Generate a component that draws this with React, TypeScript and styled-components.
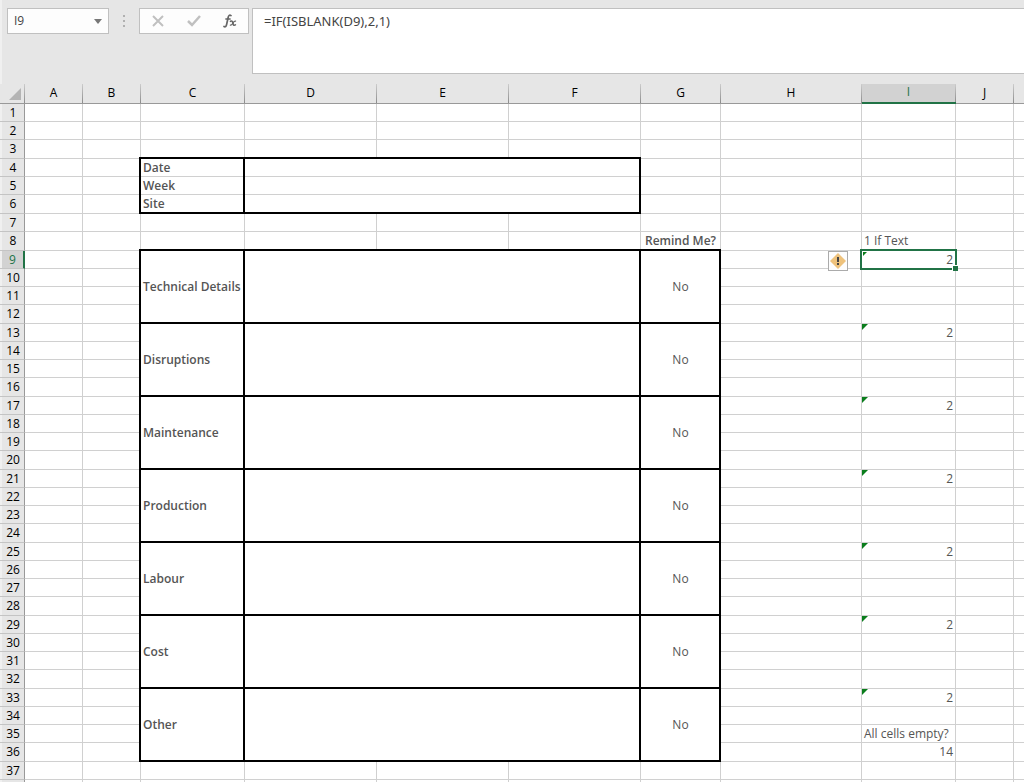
import React from "react";
import styled, { createGlobalStyle, css } from "styled-components";

const GREEN = "#217346";
const GRID = "#d0d0d0";
const LINE = "#999999";
const EDGE = "linear-gradient(#f0f0f0, #f0f0f0) left / 2px 100% no-repeat";

const GlobalStyle = createGlobalStyle`
  *, *::before, *::after { box-sizing: border-box; }
  body {
    margin: 0;
    background: #fff;
    font-family: "Open Sans", "Noto Sans", sans-serif;
    font-size: 12px;
    line-height: 16px;
    color: #555;
  }
  input, textarea, button { font: inherit; color: inherit; margin: 0; }
`;

const Window = styled.div`
  height: 100vh;
  overflow: hidden;
  display: flex;
  flex-direction: column;
`;

const FormulaBar = styled.header`
  flex: none;
  display: flex;
  align-items: flex-start;
  padding: 8px 0 10px 7px;
  background: ${EDGE} #e6e6e6;
`;

const NameBox = styled.div`
  display: flex;
  width: 102px;
  height: 26px;
  background: #fdfdfd;
  border: 1px solid #c0c0c0;
`;

const NameInput = styled.input`
  flex: 1;
  min-width: 0;
  padding: 0 0 0 6px;
  border: 0;
  background: none;
  outline: none;
  color: #444;
`;

const PlainButton = styled.button`
  display: flex;
  align-items: center;
  justify-content: center;
  padding: 0;
  border: 0;
  background: none;
`;

const DropButton = styled(PlainButton)`
  width: 20px;
`;

const Dots = styled.div`
  display: flex;
  flex-direction: column;
  align-items: center;
  justify-content: center;
  gap: 3px;
  width: 30px;
  height: 26px;
`;

const Dot = styled.span`
  width: 2px;
  height: 2px;
  background: #b0b0b0;
`;

const Actions = styled.div`
  display: flex;
  width: 110px;
  height: 26px;
  margin-right: 3px;
  background: #fdfdfd;
  border: 1px solid #c0c0c0;
`;

const ActionButton = styled(PlainButton)`
  flex: 1;
`;

const Formula = styled.textarea`
  flex: 1;
  min-width: 0;
  height: 66px;
  padding: 4px 11px;
  border: 1px solid #c0c0c0;
  border-right: 0;
  background: #fff;
  outline: none;
  resize: none;
  font-family: "Noto Sans", sans-serif;
  font-size: 13px;
  line-height: 16px;
  color: #444;
`;

const Sheet = styled.table`
  width: 100%;
  table-layout: fixed;
  border-collapse: separate;
  border-spacing: 0;
`;

const Col = styled.col<{ $w?: number }>`
  width: ${(p) => (p.$w ? `${p.$w}px` : "auto")};
`;

const ColumnHead = styled.th<{ $active?: boolean }>`
  height: 20px;
  padding: 0 1px 2px 0;
  font-weight: 500;
  color: ${(p) => (p.$active ? GREEN : "#000")};
  background: linear-gradient(#cccccc, #8c8c8c) right / 1px 100% no-repeat
    ${(p) => (p.$active ? "#d2d2d2" : "#e6e6e6")};
  border-bottom: ${(p) => (p.$active ? `2px solid ${GREEN}` : `1px solid ${LINE}`)};
  &:last-child {
    background: #e6e6e6;
  }
`;

const Corner = styled(ColumnHead)`
  text-align: right;
  vertical-align: bottom;
  line-height: 0;
  padding: 0 4px 3px 0;
`;

const RowHead = styled.th<{ $active?: boolean }>`
  padding: 0 0 0 2px;
  font-weight: 500;
  color: ${(p) => (p.$active ? GREEN : "#000")};
  background: ${EDGE} ${(p) => (p.$active ? "#d2d2d2" : "#e6e6e6")};
  border-bottom: 1px solid #c4c4c4;
  border-right: ${(p) => (p.$active ? `2px solid ${GREEN}` : `1px solid ${LINE}`)};
`;

const Row = styled.tr<{ $h: number }>`
  height: ${(p) => p.$h}px;
`;

type CellProps = { $align?: string; $bold?: boolean; $frame?: string };

const Cell = styled.td<CellProps>`
  position: relative;
  padding: 0 2px;
  white-space: nowrap;
  text-align: ${(p) => p.$align ?? "left"};
  font-weight: ${(p) => (p.$bold ? 600 : 400)};
  border-right: 1px solid ${GRID};
  border-bottom: 1px solid ${GRID};
  &:last-child {
    border-right: 0;
  }
  ${(p) =>
    p.$frame &&
    css`
      &::after {
        content: "";
        position: absolute;
        inset: -2px -1px -1px -2px;
        z-index: 1;
        pointer-events: none;
        border: 0 solid #000;
        border-left-width: 2px;
        border-right-width: 2px;
        border-top-width: ${p.$frame.includes("t") ? "2px" : "0"};
        border-bottom-width: ${p.$frame.includes("b") ? "2px" : "0"};
      }
    `}
`;

const EdgeCell = styled(Cell)`
  border-right: 0;
`;

const ErrorMark = styled.span`
  position: absolute;
  top: 0;
  left: 0;
  width: 6px;
  height: 6px;
  background: #0a7d1c;
  clip-path: polygon(0 0, 100% 0, 0 100%);
`;

const Selection = styled.span`
  position: absolute;
  inset: -2px;
  z-index: 2;
  border: 2px solid ${GREEN};
  box-shadow: inset 0 0 0 1px #fff;
  pointer-events: none;
  &::after {
    content: "";
    position: absolute;
    right: -3px;
    bottom: -3px;
    width: 6px;
    height: 6px;
    background: ${GREEN};
    border-top: 1px solid #fff;
    border-left: 1px solid #fff;
  }
`;

const WarnButton = styled(PlainButton)`
  position: absolute;
  top: 0;
  right: 13px;
  z-index: 2;
  width: 20px;
  height: 20px;
  background: #fdfdfd;
  border: 1px solid #ababab;
`;

const columns: [string, number?][] = [
  ["A", 58], ["B", 58], ["C", 104], ["D", 132], ["E", 132], ["F", 132],
  ["G", 80], ["H", 141], ["I", 94], ["J", 58], [""],
];

const details = ["Date", "Week", "Site"];
const sections = ["Technical Details", "Disruptions", "Maintenance", "Production", "Labour", "Cost", "Other"];
const FIRST = 9;
const LAST = 36;

const rowHeight = (n: number) => ([3, 6, 8].includes(n) || (n > 8 && n % 4 === 0) ? 19 : 18);

function MiddleCells({ n }: { n: number }) {
  if (n >= 4 && n <= 6) {
    const frame = n === 4 ? "st" : n === 6 ? "sb" : "s";
    return (
      <>
        <Cell $bold $frame={frame}>{details[n - 4]}</Cell>
        <Cell colSpan={3} $frame={frame} />
        <Cell />
      </>
    );
  }
  if (n >= FIRST && n <= LAST) {
    if ((n - FIRST) % 4) return null;
    return (
      <>
        <Cell rowSpan={4} $bold $frame="tb">{sections[(n - FIRST) / 4]}</Cell>
        <Cell rowSpan={4} colSpan={3} $frame="tb" />
        <Cell rowSpan={4} $align="center" $frame="tb">No</Cell>
      </>
    );
  }
  return (
    <>
      <Cell /><Cell /><Cell /><Cell />
      <Cell $align="center" $bold>{n === 8 ? "Remind Me?" : null}</Cell>
    </>
  );
}

function ResultCell({ n }: { n: number }) {
  if (n === 8) return <Cell>1 If Text</Cell>;
  if (n === 35) return <Cell>All cells empty?</Cell>;
  if (n === 36) return <Cell $align="right">14</Cell>;
  if (n >= FIRST && n <= LAST && (n - FIRST) % 4 === 0) {
    return (
      <Cell $align="right">
        <ErrorMark />2{n === FIRST && <Selection />}
      </Cell>
    );
  }
  return <Cell />;
}

export default function App() {
  return (
    <Window>
      <GlobalStyle />
      <FormulaBar>
        <NameBox>
          <NameInput aria-label="Name box" defaultValue="I9" />
          <DropButton type="button" aria-label="Show names">
            <svg width="8" height="5" viewBox="0 0 8 5"><path d="M0 0h8L4 5z" fill="#777" /></svg>
          </DropButton>
        </NameBox>
        <Dots><Dot /><Dot /><Dot /></Dots>
        <Actions>
          <ActionButton type="button" aria-label="Cancel">
            <svg width="12" height="12" viewBox="0 0 12 12" fill="none" stroke="#c0c0c0" strokeWidth="2">
              <path d="M1 1l10 10M11 1L1 11" />
            </svg>
          </ActionButton>
          <ActionButton type="button" aria-label="Enter">
            <svg width="14" height="12" viewBox="0 0 14 12" fill="none" stroke="#c0c0c0" strokeWidth="2.500">
              <path d="M1 6l4 4L13 1" />
            </svg>
          </ActionButton>
          <ActionButton type="button" aria-label="Insert function">
            <svg width="14" height="14" viewBox="0 0 14 14" fill="none" stroke="#666" strokeLinecap="round">
              <path d="M8 1.6C6.6.6 5.6 1.4 5.200 3.300L3.600 10.500C3.200 12.500 2.200 13.300 1 12.500" strokeWidth="1.700" />
              <path d="M2.800 5h4.400" strokeWidth="1.300" />
              <path d="M7.500 7.300c1.600-.8 2 .2 2.400 1.900s.9 2.600 2.500 1.700" strokeWidth="1.600" />
              <path d="M12.600 7.200c-1.400-.3-2 .9-2.700 2s-1.200 2.200-2.600 1.900" strokeWidth="1.200" />
            </svg>
          </ActionButton>
        </Actions>
        <Formula aria-label="Formula bar" defaultValue="=IF(ISBLANK(D9),2,1)" spellCheck={false} />
      </FormulaBar>
      <Sheet>
        <colgroup>
          <Col $w={25} />
          {columns.map(([name, w]) => <Col key={name} $w={w} />)}
        </colgroup>
        <thead>
          <tr>
            <Corner aria-label="Select all">
              <svg width="12" height="12" viewBox="0 0 12 12"><path d="M12 0v12H0z" fill="#b4b4b4" /></svg>
            </Corner>
            {columns.map(([name]) => (
              <ColumnHead key={name} scope="col" $active={name === "I"}>{name}</ColumnHead>
            ))}
          </tr>
        </thead>
        <tbody>
          {Array.from({ length: 38 }, (_, i) => i + 1).map((n) => (
            <Row key={n} $h={rowHeight(n)}>
              <RowHead scope="row" $active={n === FIRST}>{n < 38 ? n : null}</RowHead>
              <Cell /><Cell />
              <MiddleCells n={n} />
              <Cell>
                {n === FIRST && (
                  <WarnButton type="button" aria-label="Formula error options">
                    <svg width="16" height="16" viewBox="0 0 16 16">
                      <path d="M8 0l8 8-8 8-8-8z" fill="#eec27c" />
                      <path d="M7 4h2v5H7zM7 10h2v2H7z" fill="#444" />
                    </svg>
                  </WarnButton>
                )}
              </Cell>
              <ResultCell n={n} />
              <Cell /><EdgeCell />
            </Row>
          ))}
        </tbody>
      </Sheet>
    </Window>
  );
}
